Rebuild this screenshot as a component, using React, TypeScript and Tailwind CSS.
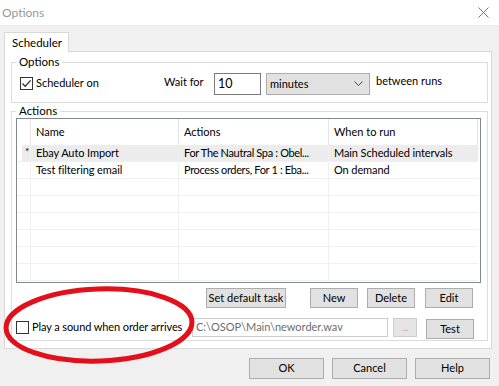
import { useState } from "react";

const font = { fontFamily: "Lato, 'Liberation Sans', sans-serif" };

const Btn = ({ label, className }: { label: string; className: string }) => (
  <button
    className={`flex shrink-0 items-center justify-center whitespace-nowrap border border-[#adadad] bg-[#e1e1e1] text-[11px] text-black ${className}`}
  >
    {label}
  </button>
);

const Check = ({ checked }: { checked: boolean }) => (
  <span className="flex h-[13px] w-[13px] shrink-0 items-center justify-center border border-[#333] bg-white">
    {checked && (
      <svg width="11" height="11" viewBox="0 0 11 11">
        <path d="M1.5 5.5 L4.2 8.3 L9.6 2.4" fill="none" stroke="#222" strokeWidth="1.2" />
      </svg>
    )}
  </span>
);

const rows = [
  { mark: "*", name: "Ebay Auto Import", actions: "For The Nautral Spa : Obel...", when: "Main Scheduled intervals" },
  { mark: "", name: "Test filtering email", actions: "Process orders, For 1 : Eba...", when: "On demand" },
  { mark: "", name: "", actions: "", when: "" },
  { mark: "", name: "", actions: "", when: "" },
  { mark: "", name: "", actions: "", when: "" },
  { mark: "", name: "", actions: "", when: "" },
  { mark: "", name: "", actions: "", when: "" },
  { mark: "", name: "", actions: "", when: "" },
];

const App = () => {
  const [schedulerOn] = useState(true);
  const [playSound] = useState(false);

  return (
    <div className="relative h-[386px] w-[499px] overflow-hidden whitespace-nowrap bg-[#f0f0f0] text-[11px] text-black" style={font}>
      {/* title bar */}
      <div className="flex h-[25px] items-center justify-between bg-white pl-[2px] pr-[10px]">
        <span className="text-[12px] text-[#999]">Options</span>
        <svg width="11" height="11" viewBox="0 0 11 11">
          <path d="M0.5 0.5 L10.5 10.5 M10.5 0.5 L0.5 10.5" stroke="#777" strokeWidth="1" />
        </svg>
      </div>

      <div className="pl-[4px] pt-[7px]">
        {/* tab */}
        <div className="relative z-[1] flex h-[20px] w-[65px] items-center border border-b-0 border-[#d9d9d9] bg-white pl-[7px] text-[11.5px]">
          Scheduler
        </div>
        {/* tab panel */}
        <div className="-mt-px flex h-[298px] w-[488px] flex-col border border-[#d9d9d9] bg-white pl-[6px] pt-[10px]">
          {/* Options group */}
          <div className="relative flex h-[41px] w-[477px] items-center border border-[#dcdcdc] pl-[8px]">
            <span className="absolute left-[4px] top-[-8px] bg-white px-[3px] text-[11.5px] leading-[14px]">Options</span>
            <div className="flex w-[80px] shrink-0 items-center gap-[3px] pt-[2px]">
              <Check checked={schedulerOn} />
              <span>Scheduler on</span>
            </div>
            <span className="ml-[64px] w-[50px] shrink-0">Wait for</span>
            <div className="mt-[3px] flex h-[22px] w-[47px] shrink-0 items-center border border-[#7a7a7a] bg-white pl-[3px] text-[12.5px]">
              10
            </div>
            <div className="ml-[5px] mt-[3px] flex h-[22px] w-[104px] shrink-0 items-center justify-between border border-[#adadad] bg-[#e1e1e1] pl-[3px] pr-[6px]">
              minutes
              <svg width="9" height="6" viewBox="0 0 9 6">
                <path d="M0.5 0.5 L4.5 4.5 L8.5 0.5" fill="none" stroke="#444" strokeWidth="1" />
              </svg>
            </div>
            <span className="mb-[3px] ml-[6px]">between runs</span>
          </div>

          {/* Actions group */}
          <div className="relative mt-[8px] flex h-[230px] w-[477px] flex-col border border-[#dcdcdc] pl-[4px] pt-[6px]">
            <span className="absolute left-[4px] top-[-8px] bg-white px-[3px] text-[11.5px] leading-[14px]">Actions</span>

            {/* list */}
            <div className="h-[165px] w-[465px] shrink-0 border border-[#828790] bg-white">
              <div className="flex h-[26px]">
                <div className="w-[14px] border-r border-[#e5e5e5]" />
                <div className="flex w-[148px] items-center border-r border-[#e5e5e5] pl-[5px]">Name</div>
                <div className="flex w-[150px] items-center border-r border-[#e5e5e5] pl-[5px]">Actions</div>
                <div className="flex w-[149px] items-center border-r border-[#e5e5e5] pl-[5px]">When to run</div>
              </div>
              {rows.map((r, i) => (
                <div key={i} className="flex h-[17px]">
                  <div className="flex w-[14px] border-b border-r border-[#f0f0f0]">
                    <span className={`ml-[5px] h-full flex-1 pl-[3px] text-[10px] leading-[12px] ${i === 0 ? "bg-[#ececec]" : ""}`}>{r.mark}</span>
                  </div>
                  <div className={`flex w-[148px] items-center overflow-hidden border-b border-r border-[#f0f0f0] pl-[5px] tracking-[-0.1px] ${i === 0 ? "bg-[#ececec]" : ""}`}>{r.name}</div>
                  <div className={`flex w-[150px] items-center overflow-hidden border-b border-r border-[#f0f0f0] pl-[5px] tracking-[-0.35px] ${i === 0 ? "bg-[#ececec]" : ""}`}>{r.actions}</div>
                  <div className={`flex w-[149px] items-center overflow-hidden border-b border-[#f0f0f0] pl-[5px] tracking-[-0.1px] ${i === 0 ? "bg-[#ececec]" : ""}`}>{r.when}</div>
                </div>
              ))}
            </div>

            {/* button row */}
            <div className="mt-[5px] flex">
              <Btn label="Set default task" className="ml-[190px] h-[20px] w-[80px]" />
              <Btn label="New" className="ml-[24px] h-[20px] w-[48px]" />
              <Btn label="Delete" className="ml-[9px] h-[20px] w-[48px]" />
              <Btn label="Edit" className="ml-[10px] h-[20px] w-[48px]" />
            </div>

            {/* sound row */}
            <div className="mt-[10px] flex items-start">
              <div className="mt-[1px] flex w-[172px] shrink-0 items-center gap-[3px] tracking-[-0.1px]">
                <Check checked={playSound} />
                <span>Play a sound when order arrives</span>
              </div>
              <div className="ml-[4px] flex h-[19px] w-[196px] shrink-0 items-center border border-[#cccccc] bg-white pl-[3px] text-[#6d6d6d]">
                C:\OSOP\Main\neworder.wav
              </div>
              <div className="ml-[5px] flex h-[19px] w-[24px] shrink-0 items-center justify-center border border-[#cccccc] bg-[#e5e5e5] text-[9px] text-[#a0a0a0]">
                ...
              </div>
              <Btn label="Test" className="ml-[9px] mt-[1px] h-[20px] w-[48px]" />
            </div>
          </div>
        </div>

        {/* dialog buttons */}
        <div className="mt-[9px] flex justify-end gap-[8px] pr-[9px]">
          <Btn label="OK" className="h-[21px] w-[75px]" />
          <Btn label="Cancel" className="h-[21px] w-[75px]" />
          <Btn label="Help" className="h-[21px] w-[75px]" />
        </div>
      </div>

      {/* hand-drawn red annotation */}
      <svg className="pointer-events-none absolute left-0 top-0" width="499" height="386" viewBox="0 0 499 386">
        <ellipse cx="99" cy="325" rx="93" ry="36" fill="none" stroke="#e3101b" strokeWidth="5" transform="rotate(-2 99 325)" />
      </svg>
    </div>
  );
};

export default App;
